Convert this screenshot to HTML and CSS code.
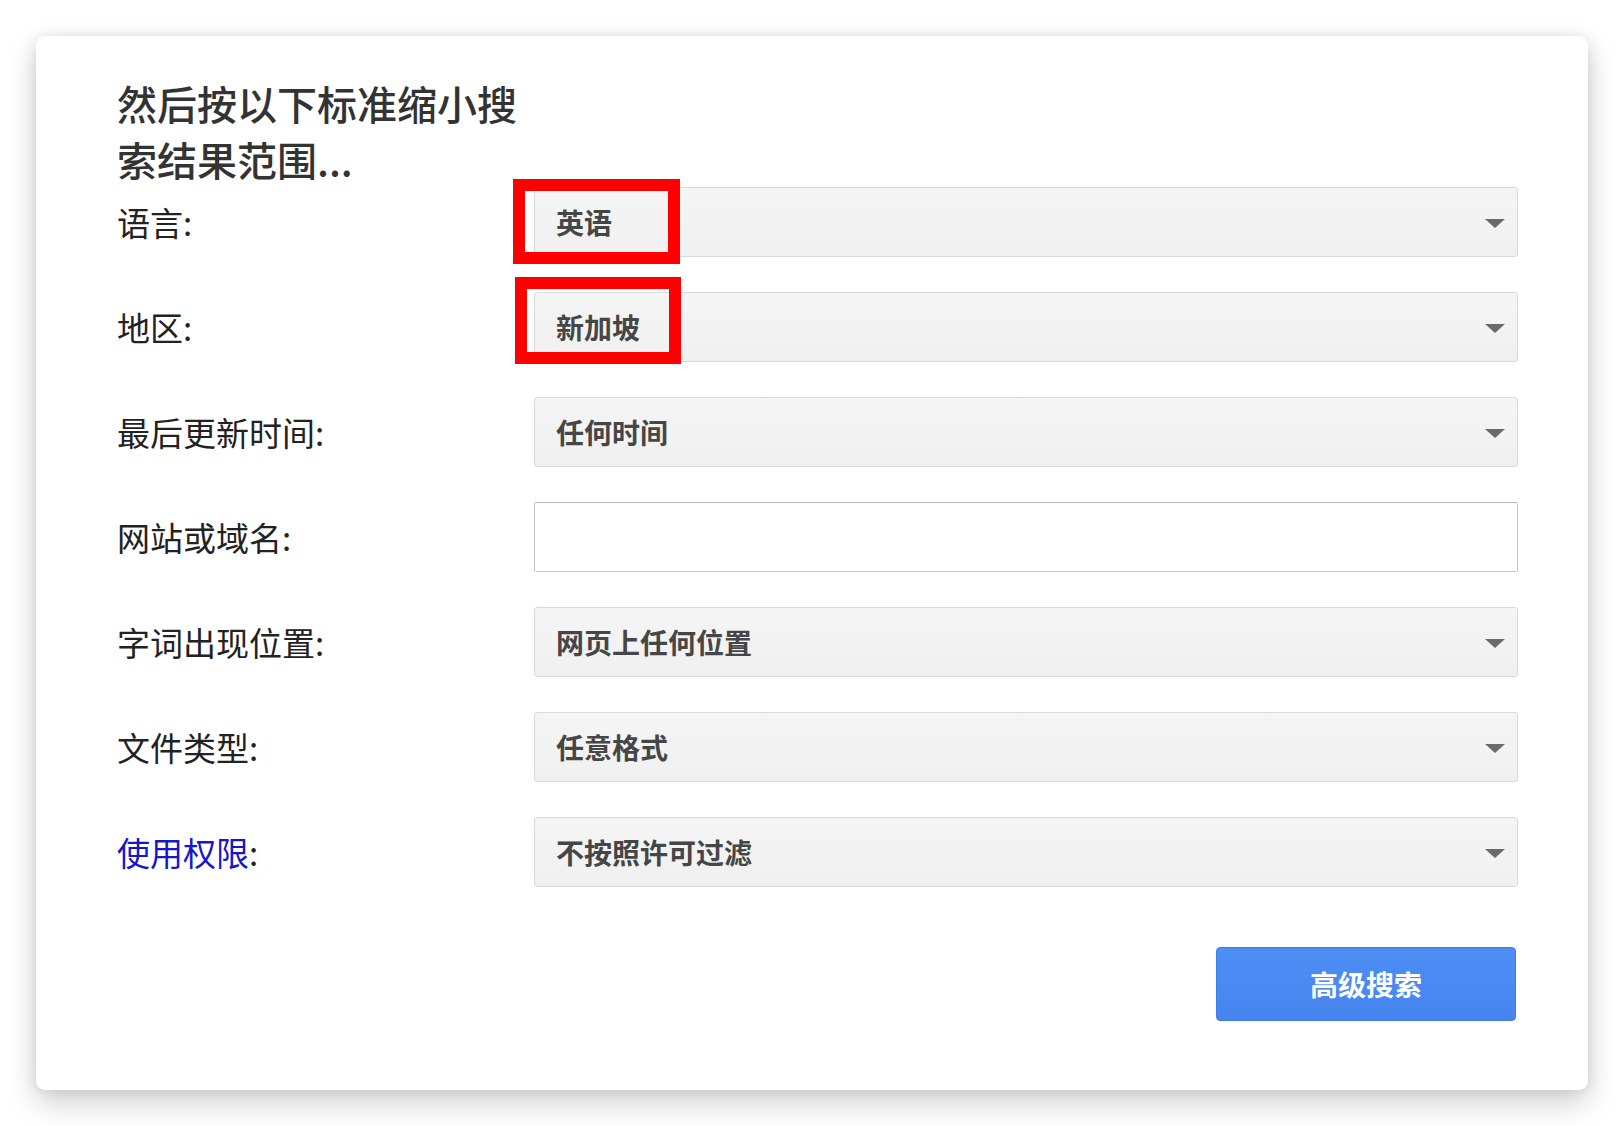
FILE: index.html
```html
<!DOCTYPE html>
<html lang="zh-CN">
<head>
<meta charset="utf-8">
<title>高级搜索</title>
<link rel="stylesheet" href="styles.css">
</head>
<body>
<div class="page">
<div class="card">
  <h2 class="title">然后按以下标准缩小搜索结果范围...</h2>
  <div class="rows">
    <div class="row">
      <div class="label">语言:</div>
      <div class="select"><span class="value">英语</span><span class="caret"></span><span class="mark mark-1"></span></div>
    </div>
    <div class="row">
      <div class="label">地区:</div>
      <div class="select"><span class="value">新加坡</span><span class="caret"></span><span class="mark mark-2"></span></div>
    </div>
    <div class="row">
      <div class="label">最后更新时间:</div>
      <div class="select"><span class="value">任何时间</span><span class="caret"></span></div>
    </div>
    <div class="row">
      <div class="label">网站或域名:</div>
      <div class="input"></div>
    </div>
    <div class="row">
      <div class="label">字词出现位置:</div>
      <div class="select"><span class="value">网页上任何位置</span><span class="caret"></span></div>
    </div>
    <div class="row">
      <div class="label">文件类型:</div>
      <div class="select"><span class="value">任意格式</span><span class="caret"></span></div>
    </div>
    <div class="row">
      <div class="label"><span class="link">使用权限</span>:</div>
      <div class="select"><span class="value">不按照许可过滤</span><span class="caret"></span></div>
    </div>
  </div>
  <div class="actions">
    <button class="btn">高级搜索</button>
  </div>
</div>
</div>
</body>
</html>
```
FILE: styles.css
```css
html, body {
  margin: 0;
  padding: 0;
  background: #ffffff;
}
body {
  font-family: "Noto Sans CJK SC", "Noto Sans", "Liberation Sans", sans-serif;
  color: #222;
}
.page {
  box-sizing: border-box;
  height: 1126px;
  padding: 36px 0 0 36px;
}
.card {
  box-sizing: border-box;
  width: 1552px;
  height: 1054px;
  padding: 39px 70px 0 81px;
  background: #fff;
  border-radius: 9px;
  box-shadow: 0 12px 30px rgba(0, 0, 0, 0.2), 0 0 14px rgba(0, 0, 0, 0.08);
}
.title {
  margin: 0;
  width: 420px;
  font-size: 40px;
  line-height: 56px;
  font-weight: 500;
  color: #333;
}
.rows {
  display: flex;
  flex-direction: column;
  gap: 35px;
}
.row {
  display: flex;
  align-items: center;
  height: 70px;
}
.label {
  width: 417px;
  flex: none;
  font-size: 33px;
  line-height: 40px;
  color: #222;
}
.link {
  color: #1616cc;
}
.select {
  position: relative;
  box-sizing: border-box;
  width: 984px;
  height: 70px;
  display: flex;
  align-items: center;
  justify-content: space-between;
  padding: 0 12px 0 21px;
  border: 1px solid #d9d9d9;
  border-radius: 3px;
  background: linear-gradient(#f5f5f5, #f0f0f0);
}
.value {
  font-size: 28px;
  font-weight: 700;
  color: #464646;
  line-height: 36px;
}
.caret {
  width: 0;
  height: 0;
  border-left: 10px solid transparent;
  border-right: 10px solid transparent;
  border-top: 9px solid #6a6a6a;
  margin-top: 2px;
}
.input {
  box-sizing: border-box;
  width: 984px;
  height: 70px;
  background: #fff;
  border: 1px solid #c8c8c8;
  border-top-color: #b8b8b8;
  border-radius: 2px;
}
.mark {
  position: absolute;
  box-sizing: border-box;
  border: 12px solid #ff0000;
}
.mark-1 {
  left: -22px;
  top: -9px;
  width: 167px;
  height: 85px;
}
.mark-2 {
  left: -20px;
  top: -16px;
  width: 166px;
  height: 87px;
}
.actions {
  display: flex;
  justify-content: flex-end;
  padding-right: 2px;
  margin-top: 60px;
}
.btn {
  box-sizing: border-box;
  width: 300px;
  height: 74px;
  border: 1px solid #3e7ce6;
  border-radius: 4px;
  background: linear-gradient(#4d8ef5, #4685ee);
  color: #fff;
  font-family: "Noto Sans CJK SC", "Noto Sans", sans-serif;
  font-size: 28px;
  font-weight: 700;
  padding: 0;
}
```
